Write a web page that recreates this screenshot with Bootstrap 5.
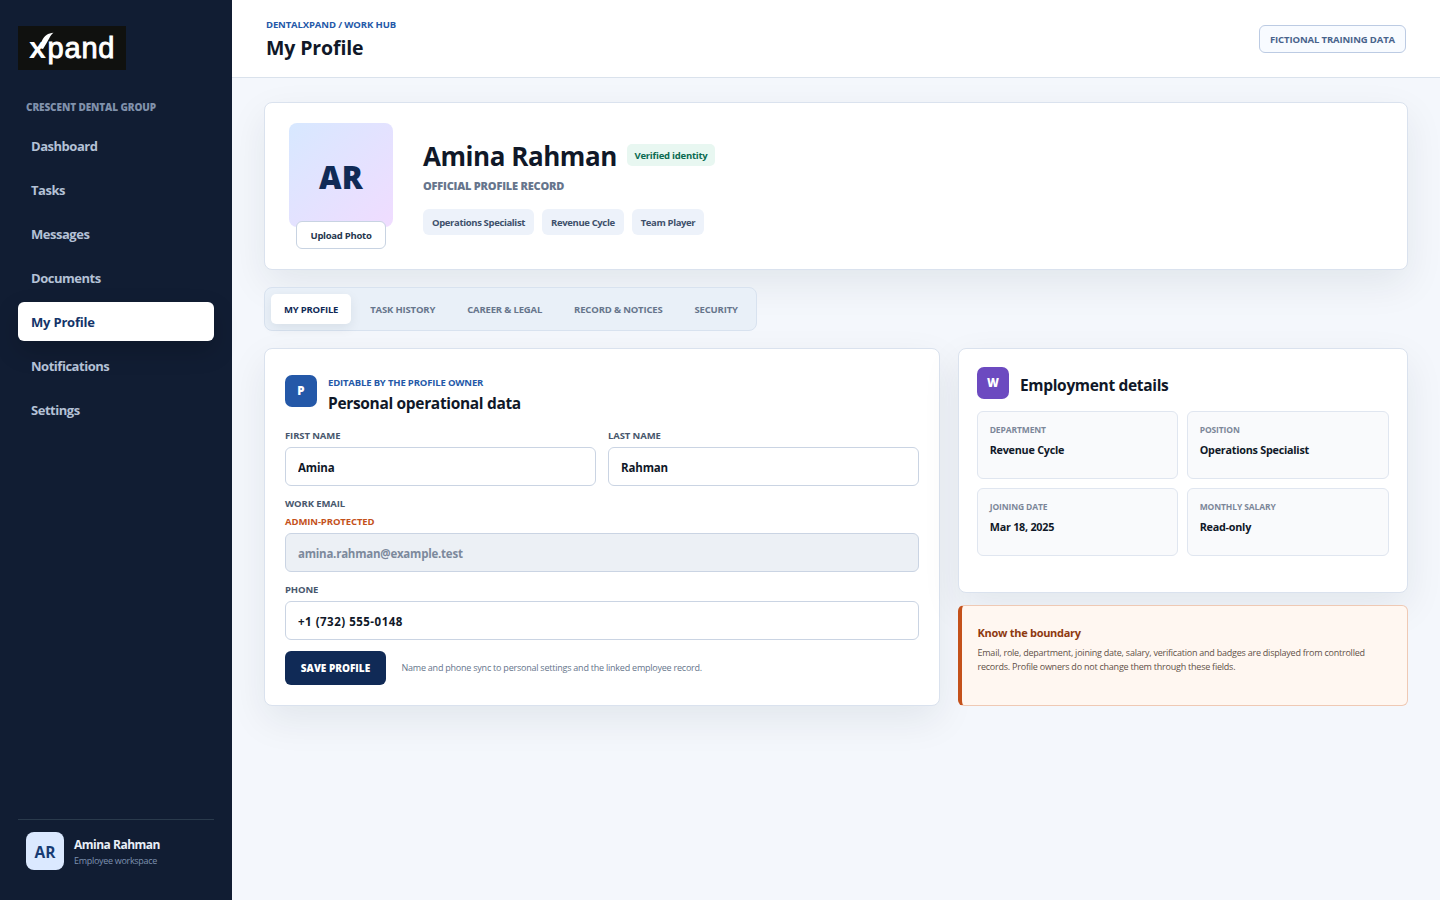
<!DOCTYPE html>
<html lang="en">
<head>
<meta charset="utf-8">
<meta name="viewport" content="width=device-width, initial-scale=1">
<title>My Profile</title>
<link href="https://cdn.jsdelivr.net/npm/bootstrap@5.3.0/dist/css/bootstrap.min.css" rel="stylesheet">
<style>
body{background:#f4f7fc;font-family:"Open Sans","Noto Sans",sans-serif;color:#101828;font-size:12px;line-height:16px}
h1,h2,h3,p{margin:0}
.shell{height:900px;overflow:hidden}
.sidebar{width:232px;background:#111d33;padding:26px 18px 30px}
.logo{width:108px;height:44px;display:block}
.org{font-size:10px;font-weight:800;letter-spacing:-.1px;color:#8091ab;padding:0 8px;margin:29px 0 12px;line-height:16px;height:15px;white-space:nowrap}
.side-nav{gap:5px}
.side-nav .nav-link{height:39px;padding:1px 13px 0;display:flex;align-items:center;border-radius:6px;color:#b4c1d6;font-size:13px;font-weight:700;letter-spacing:-.47px}
.side-nav .nav-link.active{background:#fff;color:#143469;letter-spacing:-.2px;box-shadow:0 10px 25px rgba(0,0,0,.18)}
.user-box{border-top:1px solid #2a3a4c;padding:12px 8px 0}
.user-av{width:38px;height:38px;border-radius:8px;background:#dbe9ff;color:#173b73;font-size:15.5px;font-weight:700;padding-top:2px}
.user-text{margin-left:10px;padding-top:5px}
.user-name{color:#e9eff8;font-weight:700;letter-spacing:-.5px}
.user-sub{color:#7d91af;font-size:9px;letter-spacing:-.3px}
.topbar{height:78px;background:#fff;border-bottom:1px solid #dae2ec;padding:2px 34px 0}
.eyebrow{color:#2458a8;font-size:9.5px;font-weight:700;letter-spacing:-.16px;line-height:16px}
.topbar .eyebrow{letter-spacing:-.12px}
.topbar h1{font-size:19.5px;font-weight:700;line-height:28px;letter-spacing:-.12px;padding-top:1px}
.train{height:28px;width:147px;border:1px solid #bccbe3;border-radius:6px;background:#f8fbff;color:#48638c;font-size:9.5px;font-weight:700;letter-spacing:-.12px;white-space:nowrap;padding-top:2px;margin-top:-1px}
.page-body{padding:24px 32px}
.panel{background:#fff;border:1px solid #dae2ee;border-radius:8px;box-shadow:0 14px 38px rgba(16,32,56,.08)}
.hero{height:168px;padding:20px 24px}
.photo{width:104px;margin-right:30px}
.photo-sq{width:104px;height:104px;border-radius:8px;background:linear-gradient(135deg,#d7e8ff,#f0dcff);color:#102a56;font-size:31px;font-weight:800;letter-spacing:.3px;padding-top:3px}
.upload{height:28px;width:90px;margin:-6px auto 0;padding:1px 0 0;position:relative;border:1px solid #c8d3e2;border-radius:6px;background:#fff;color:#26364e;font-size:9.5px;font-weight:700;letter-spacing:-.27px}
.hero h2{font-size:26px;font-weight:700;line-height:34px;letter-spacing:-.45px;width:193px;white-space:nowrap}
.verified{height:22px;width:88px;border-radius:5px;background:#e8f7f1;color:#0c6b51;font-size:9.5px;font-weight:700;letter-spacing:-.23px;margin:0 0 2px 11px;padding-top:1px}
.record{color:#66758c;font-size:11px;font-weight:800;letter-spacing:-.2px;line-height:16px;margin:5px 0 15px}
.chip{height:26px;padding:1px 9px 0;border-radius:6px;background:#edf2fa;color:#3e506b;font-size:9.5px;font-weight:700;letter-spacing:-.36px}
.tabs{width:493px;height:44px;margin-top:17px;padding:6px;gap:6px;border:1px solid #d8e2ef;border-radius:8px;background:#e9f0f8;position:relative}
.tabs .nav-link{height:30px;padding:2px 13px 0;display:flex;align-items:center;border-radius:5px;color:#66758c;font-size:9.5px;font-weight:700;white-space:nowrap;letter-spacing:-.17px}
.tabs .nav-link.active{background:#fff;color:#102a56;letter-spacing:-.2px;box-shadow:0 4px 12px rgba(16,32,56,.08)}
.columns{margin-top:17px;gap:18px}
.form-card{width:676px;height:358px;padding:26px 20px 20px}
.tile{width:32px;height:32px;border-radius:7px;color:#fff;font-size:11.5px;font-weight:800}
.h-gap{gap:11px}
.h-card{font-size:15.5px;font-weight:700;letter-spacing:-.33px;line-height:24px}
.pair{gap:12px;margin-top:13px}
.block{margin-top:10px}
.lab{display:block;color:#48576d;font-size:9.5px;font-weight:700;letter-spacing:-.1px;line-height:16px;margin-bottom:3px}
.lab.over{margin-bottom:2px}
.lab.prot{color:#c4511b}
.form-control.field{height:39px;padding:1px 12px 0;border:1px solid #cad4e3;border-radius:6px;color:#101828;font-size:11.5px;font-weight:700;letter-spacing:-.15px;line-height:16px}
.form-control.field:disabled{background:#ecf0f5;color:#7c899c;letter-spacing:-.23px}
.form-control.phone{letter-spacing:.5px}
.actions{margin-top:11px}
.save{width:101px;height:34px;border-radius:6px;background:#102a56;color:#fff;font-size:10px;font-weight:800;padding:0;border:0}
.hint{color:#66758c;font-size:9px;letter-spacing:-.23px;margin-left:15.5px;margin-top:-1px}
.side-col{width:450px}
.work-card{height:245px;padding:18px}
.facts{display:grid;grid-template-columns:201px 202px;gap:9px;margin-top:12px}
.fact{height:68px;border:1px solid #e0e6f0;border-radius:6px;background:#f9fafc;padding:10px 11.7px}
.fact-k{color:#7c8799;font-size:8.5px;font-weight:700;letter-spacing:-.12px;line-height:16px}
.fact-v{font-size:10.8px;font-weight:700;letter-spacing:-.24px;line-height:16px;margin-top:4px}
.note{height:101px;margin-top:12px;border:1px solid #efc9b4;border-left:4px solid #c4511b;border-radius:6px;background:#fff7f1;padding:19px 15.5px}
.note h3{color:#8e3a10;font-size:11px;font-weight:700;letter-spacing:-.28px;line-height:16px}
.note p{color:#5f5148;font-size:9px;letter-spacing:-.23px;line-height:14px;margin-top:5px}
</style>
</head>
<body>
<div class="shell d-flex">
  <aside class="sidebar d-flex flex-column flex-shrink-0">
    <svg class="logo" viewBox="0 0 108 44" role="img" aria-label="Xpand">
      <rect width="108" height="44" fill="#10110f"/>
      <g fill="#fff" font-family="Liberation Sans" font-size="29">
        <text x="11" y="32" font-weight="700" textLength="17" lengthAdjust="spacingAndGlyphs">x</text>
        <text x="29.5" y="32" textLength="67" stroke="#fff" stroke-width=".9">pand</text>
      </g>
      <path d="M21.500 22C22.500 17 25 11 28.500 9C30.500 7.500 33 7 35.500 6.700C32 9 31 14 25 23Z" fill="#fff"/>
    </svg>
    <div class="org">CRESCENT DENTAL GROUP</div>
    <nav class="side-nav nav flex-column">
      <a class="nav-link" href="#">Dashboard</a>
      <a class="nav-link" href="#">Tasks</a>
      <a class="nav-link" href="#">Messages</a>
      <a class="nav-link" href="#">Documents</a>
      <a class="nav-link active" href="#">My Profile</a>
      <a class="nav-link" href="#">Notifications</a>
      <a class="nav-link" href="#">Settings</a>
    </nav>
    <div class="user-box d-flex mt-auto">
      <div class="user-av d-flex align-items-center justify-content-center">AR</div>
      <div class="user-text">
        <div class="user-name">Amina Rahman</div>
        <div class="user-sub">Employee workspace</div>
      </div>
    </div>
  </aside>

  <main class="flex-grow-1">
    <header class="topbar d-flex align-items-center justify-content-between">
      <div>
        <div class="eyebrow">DENTALXPAND / WORK HUB</div>
        <h1>My Profile</h1>
      </div>
      <span class="train d-flex align-items-center justify-content-center">FICTIONAL TRAINING DATA</span>
    </header>

    <div class="page-body">
      <section class="panel hero d-flex">
        <div class="photo flex-shrink-0">
          <div class="photo-sq d-flex align-items-center justify-content-center">AR</div>
          <button class="upload d-flex align-items-center justify-content-center">Upload Photo</button>
        </div>
        <div class="pt-3">
          <div class="d-flex align-items-center">
            <h2>Amina Rahman</h2>
            <span class="verified d-flex align-items-center justify-content-center">Verified identity</span>
          </div>
          <div class="record">OFFICIAL PROFILE RECORD</div>
          <div class="d-flex gap-2">
            <span class="chip d-flex align-items-center">Operations Specialist</span>
            <span class="chip d-flex align-items-center">Revenue Cycle</span>
            <span class="chip d-flex align-items-center">Team Player</span>
          </div>
        </div>
      </section>

      <nav class="tabs nav flex-nowrap">
        <a class="nav-link active" href="#">MY PROFILE</a>
        <a class="nav-link" href="#">TASK HISTORY</a>
        <a class="nav-link" href="#">CAREER &amp; LEGAL</a>
        <a class="nav-link" href="#">RECORD &amp; NOTICES</a>
        <a class="nav-link" href="#">SECURITY</a>
      </nav>

      <div class="columns d-flex">
        <section class="panel form-card">
          <div class="d-flex h-gap">
            <div class="tile d-flex align-items-center justify-content-center" style="background:#2458a8">P</div>
            <div>
              <div class="eyebrow">EDITABLE BY THE PROFILE OWNER</div>
              <h2 class="h-card">Personal operational data</h2>
            </div>
          </div>
          <div class="pair d-flex">
            <div class="flex-fill">
              <label class="lab" for="fn">FIRST NAME</label>
              <input id="fn" class="form-control field" value="Amina">
            </div>
            <div class="flex-fill">
              <label class="lab" for="ln">LAST NAME</label>
              <input id="ln" class="form-control field" value="Rahman">
            </div>
          </div>
          <div class="block">
            <label class="lab over" for="em">WORK EMAIL</label>
            <span class="lab prot">ADMIN-PROTECTED</span>
            <input id="em" class="form-control field" value="amina.rahman@example.test" disabled>
          </div>
          <div class="block">
            <label class="lab" for="ph">PHONE</label>
            <input id="ph" class="form-control field phone" value="+1 (732) 555-0148">
          </div>
          <div class="actions d-flex align-items-center">
            <button class="save">SAVE PROFILE</button>
            <span class="hint">Name and phone sync to personal settings and the linked employee record.</span>
          </div>
        </section>

        <div class="side-col">
          <section class="panel work-card">
            <div class="d-flex h-gap align-items-center">
              <div class="tile d-flex align-items-center justify-content-center" style="background:#6c4ac0">W</div>
              <h2 class="h-card pt-1">Employment details</h2>
            </div>
            <div class="facts">
              <div class="fact"><div class="fact-k">DEPARTMENT</div><div class="fact-v">Revenue Cycle</div></div>
              <div class="fact"><div class="fact-k">POSITION</div><div class="fact-v">Operations Specialist</div></div>
              <div class="fact"><div class="fact-k">JOINING DATE</div><div class="fact-v">Mar 18, 2025</div></div>
              <div class="fact"><div class="fact-k">MONTHLY SALARY</div><div class="fact-v">Read-only</div></div>
            </div>
          </section>
          <section class="note">
            <h3>Know the boundary</h3>
            <p>Email, role, department, joining date, salary, verification and badges are displayed from controlled<br>records. Profile owners do not change them through these fields.</p>
          </section>
        </div>
      </div>
    </div>
  </main>
</div>
</body>
</html>
